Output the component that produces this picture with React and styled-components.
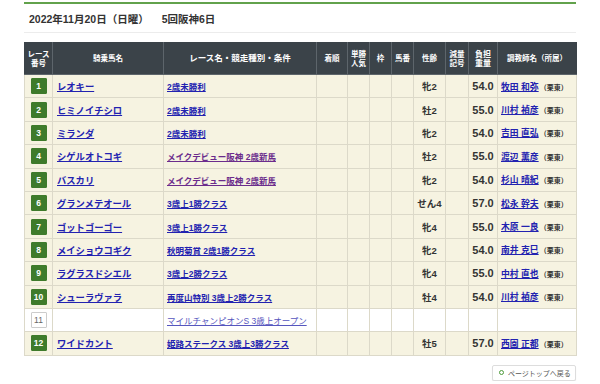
import React from "react";
import styled, { createGlobalStyle } from "styled-components";

const GlobalStyle = createGlobalStyle`
  body {
    margin: 0;
    background: #fff;
    font-family: "Liberation Sans", "Noto Sans CJK JP", sans-serif;
    color: #333;
  }
`;

const races = [
  { no: 1, horse: "レオキー", race: "2歳未勝利", sex: "牝2", weight: "54.0", trainer: "牧田 和弥" },
  { no: 2, horse: "ヒミノイチシロ", race: "2歳未勝利", sex: "牡2", weight: "55.0", trainer: "川村 禎彦" },
  { no: 3, horse: "ミランダ", race: "2歳未勝利", sex: "牝2", weight: "54.0", trainer: "吉田 直弘" },
  { no: 4, horse: "シゲルオトコギ", race: "メイクデビュー阪神 2歳新馬", visited: true, sex: "牡2", weight: "55.0", trainer: "渡辺 薫彦" },
  { no: 5, horse: "バスカリ", race: "メイクデビュー阪神 2歳新馬", visited: true, sex: "牝2", weight: "54.0", trainer: "杉山 晴紀" },
  { no: 6, horse: "グランメテオール", race: "3歳上1勝クラス", sex: "せん4", weight: "57.0", trainer: "松永 幹夫" },
  { no: 7, horse: "ゴットゴーゴー", race: "3歳上1勝クラス", sex: "牝4", weight: "55.0", trainer: "木原 一良" },
  { no: 8, horse: "メイショウコギク", race: "秋明菊賞 2歳1勝クラス", sex: "牝2", weight: "54.0", trainer: "南井 克巳" },
  { no: 9, horse: "ラグラスドシエル", race: "3歳上2勝クラス", sex: "牝4", weight: "55.0", trainer: "中村 直也" },
  { no: 10, horse: "シューラヴァラ", race: "再度山特別 3歳上2勝クラス", sex: "牡4", weight: "54.0", trainer: "川村 禎彦" },
  { no: 11, empty: true, race: "マイルチャンピオンS 3歳上オープン" },
  { no: 12, horse: "ワイドカント", race: "姫路ステークス 3歳上3勝クラス", sex: "牡5", weight: "57.0", trainer: "西園 正都" },
];

const widths = [28, 111, 153, 31, 22, 22, 22, 32, 23, 29, 79];

const Page = styled.div`
  width: 552px;
  margin: 0 24px;
  padding-top: 2px;
`;

const DateBar = styled.div`
  border-top: 2px solid #62a24c;
  border-bottom: 1px solid #ececec;
  height: 28px;
  display: flex;
  align-items: center;
  gap: 13px;
  padding-left: 5px;
  font-size: 10.5px;
  font-weight: bold;
  color: #333;
`;

const Table = styled.table`
  margin-top: 9px;
  width: 552px;
  border-collapse: collapse;
  table-layout: fixed;
`;

const Th = styled.th`
  background: #3b4349;
  color: #fff;
  font-size: ${({ $size }) => $size || 7.5}px;
  font-weight: bold;
  line-height: 9px;
  height: 31px;
  padding: 0;
  border: 1px solid #5d656b;
  border-top-color: #3b4349;
  text-align: center;

  &:first-child { border-left-color: #3b4349; }
  &:last-child { border-right-color: #3b4349; }
`;

const Tr = styled.tr`
  background: ${({ $empty }) => ($empty ? "#fff" : "#f6f3e1")};
`;

const Td = styled.td`
  height: 22.4px;
  padding: 0 0 0 ${({ $pad }) => $pad || 0}px;
  border: 1px solid #dcd9c9;
  font-size: 9px;
  font-weight: bold;
  text-align: ${({ $align }) => $align || "left"};
  white-space: nowrap;
  overflow: hidden;
`;

const Badge = styled.span`
  display: inline-flex;
  align-items: center;
  justify-content: center;
  width: 16px;
  height: 16px;
  box-sizing: border-box;
  background: ${({ $empty }) => ($empty ? "#fff" : "#3e7b2b")};
  color: ${({ $empty }) => ($empty ? "#666" : "#fff")};
  border: 1px solid ${({ $empty }) => ($empty ? "#ccc" : "#3e7b2b")};
  border-radius: 1px;
  font-size: 8.5px;
  font-weight: ${({ $empty }) => ($empty ? "normal" : "bold")};
  vertical-align: middle;
`;

const Link = styled.a`
  color: ${({ $visited, $light }) => ($light ? "#5656be" : $visited ? "#6b2c8c" : "#2222b0")};
  font-weight: ${({ $light }) => ($light ? "normal" : "bold")};
  font-size: ${({ $size }) => $size || 8.5}px;
  text-decoration: underline;
  cursor: pointer;
`;

const SexAge = styled.span`
  font-size: 9.5px;
  color: #333;
`;

const Weight = styled.span`
  font-size: 11px;
  color: #333;
`;

const Affil = styled.span`
  font-size: 7px;
  color: #333;
  margin-left: 1px;
`;

const Footer = styled.div`
  display: flex;
  justify-content: flex-end;
  margin-top: 9px;
`;

const TopButton = styled.button`
  display: flex;
  align-items: center;
  gap: 4px;
  width: 84px;
  height: 16px;
  padding: 0 0 0 6px;
  background: #fff;
  border: 1px solid #dddddd;
  border-radius: 2px;
  box-shadow: 0 1px 1px rgba(0, 0, 0, 0.08);
  font-family: "Liberation Sans", "Noto Sans CJK JP", sans-serif;
  font-size: 7px;
  color: #555;
`;

const Dot = styled.span`
  width: 5px;
  height: 5px;
  box-sizing: border-box;
  border: 1.5px solid #4d9a3a;
  border-radius: 50%;
`;

export default function App() {
  return (
    <>
      <GlobalStyle />
      <Page>
        <DateBar>
          <span>2022年11月20日（日曜）</span>
          <span>5回阪神6日</span>
        </DateBar>
        <Table>
          <colgroup>
            {widths.map((w, i) => (
              <col key={i} style={{ width: w }} />
            ))}
          </colgroup>
          <thead>
            <tr>
              <Th>レース<br />番号</Th>
              <Th>騎乗馬名</Th>
              <Th $size={8.5}>レース名・競走種別・条件</Th>
              <Th>着順</Th>
              <Th>単勝<br />人気</Th>
              <Th>枠</Th>
              <Th>馬番</Th>
              <Th>性齢</Th>
              <Th>減量<br />記号</Th>
              <Th $size={8}>負担<br />重量</Th>
              <Th>調教師名（所属）</Th>
            </tr>
          </thead>
          <tbody>
            {races.map((r) => (
              <Tr key={r.no} $empty={r.empty}>
                <Td $align="center">
                  <Badge $empty={r.empty}>{r.no}</Badge>
                </Td>
                <Td $pad={4}>
                  {r.horse && <Link $size={9.3}>{r.horse}</Link>}
                </Td>
                <Td $pad={3}>
                  <Link $visited={r.visited} $light={r.empty}>{r.race}</Link>
                </Td>
                <Td />
                <Td />
                <Td />
                <Td />
                <Td $align="center">{r.sex && <SexAge>{r.sex}</SexAge>}</Td>
                <Td />
                <Td $align="center">{r.weight && <Weight>{r.weight}</Weight>}</Td>
                <Td $pad={3}>
                  {r.trainer && (
                    <>
                      <Link $size={8.8}>{r.trainer}</Link>
                      <Affil>（栗東）</Affil>
                    </>
                  )}
                </Td>
              </Tr>
            ))}
          </tbody>
        </Table>
        <Footer>
          <TopButton>
            <Dot />
            ページトップへ戻る
          </TopButton>
        </Footer>
      </Page>
    </>
  );
}
